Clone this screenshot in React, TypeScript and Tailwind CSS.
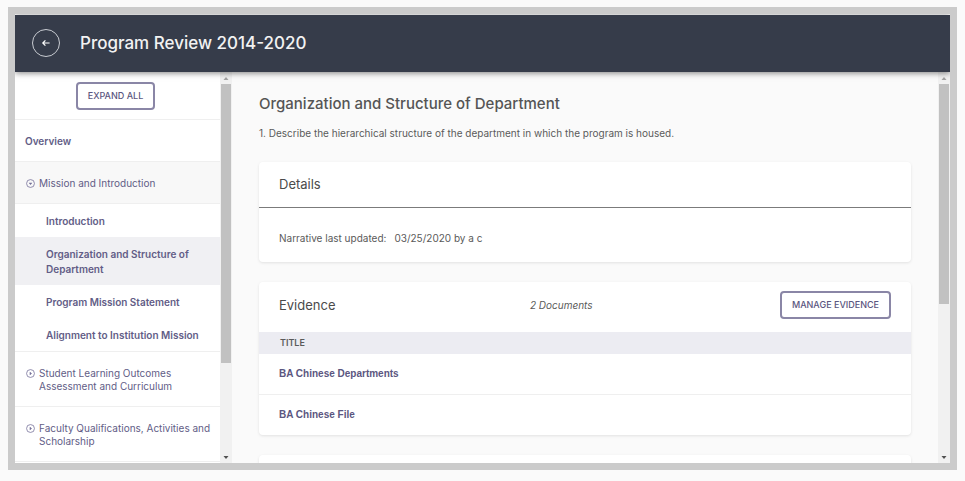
import type { ReactNode } from 'react';

interface NavSection {
  label: string;
  open?: boolean;
  children?: string[];
}

const SECTIONS: NavSection[] = [
  {
    label: 'Mission and Introduction',
    open: true,
    children: [
      'Introduction',
      'Organization and Structure of Department',
      'Program Mission Statement',
      'Alignment to Institution Mission',
    ],
  },
  { label: 'Student Learning Outcomes Assessment and Curriculum' },
  { label: 'Faculty Qualifications, Activities and Scholarship' },
];

const ACTIVE_PAGE = 'Organization and Structure of Department';
const DOCUMENTS = ['BA Chinese Departments', 'BA Chinese File'];

function ToggleIcon({ open }: { open?: boolean }) {
  return (
    <svg viewBox="0 0 16 16" className="mt-[2px] size-[9px] shrink-0" fill="none" stroke="#77729a" strokeWidth="1.4" aria-hidden="true">
      <circle cx="8" cy="8" r="7" />
      <path d={open ? 'M5.5 7h5L8 10Z' : 'M7 5.5v5L10 8Z'} fill="#77729a" strokeWidth="0.8" />
    </svg>
  );
}

function ScrollTrack({ thumb }: { thumb: string }) {
  return (
    <div className="flex w-3 shrink-0 flex-col items-center bg-[#f1f1f1]" aria-hidden="true">
      <svg viewBox="0 0 12 12" className="size-3 shrink-0">
        <path d="M3.5 8h5L6 5Z" fill="#a3a3a3" />
      </svg>
      <div className="min-h-0 w-full grow px-px">
        <div className={`w-full bg-[#c1c1c1] ${thumb}`} />
      </div>
      <svg viewBox="0 0 12 12" className="size-3 shrink-0">
        <path d="M3.5 5h5L6 8Z" fill="#505050" />
      </svg>
    </div>
  );
}

function OutlineButton({ children }: { children: ReactNode }) {
  return (
    <button
      type="button"
      className="h-7 rounded-[4px] border-2 border-[#8a86a6] bg-white px-[10px] text-[9px] leading-3 font-medium text-[#5b5680]"
    >
      {children}
    </button>
  );
}

function Card({ children }: { children?: ReactNode }) {
  return <section className="mb-5 min-h-10 rounded-[4px] bg-white shadow-[0_1px_3px_rgba(0,0,0,0.1)]">{children}</section>;
}

function Sidebar() {
  return (
    <nav className="w-[205px] shrink-0 overflow-hidden bg-white text-[10px] text-[#625d86]">
      <div className="flex h-12 items-center justify-center border-b border-[#efefef] pr-1">
        <OutlineButton>EXPAND ALL</OutlineButton>
      </div>
      <a href="#overview" className="block border-b border-[#efefef] px-[10px] pt-[14px] pb-3 leading-[15px] font-semibold">
        Overview
      </a>
      {SECTIONS.map((section) => (
        <div key={section.label} className="border-b border-[#efefef]">
          <button
            type="button"
            aria-expanded={!!section.open}
            className={`flex w-full gap-1 pt-[15px] pr-1 pb-[13px] pl-[11px] text-left leading-[13px] ${
              section.open ? 'border-b border-[#efefef] bg-[#f8f8f8]' : ''
            }`}
          >
            <ToggleIcon open={section.open} />
            <span>{section.label}</span>
          </button>
          {section.children?.map((page) => (
            <a
              key={page}
              href="#page"
              className={`block pt-[10px] pr-4 pb-2 pl-[31px] leading-[15px] font-semibold ${
                page === ACTIVE_PAGE ? 'bg-[#f0f0f3]' : ''
              }`}
            >
              {page}
            </a>
          ))}
        </div>
      ))}
    </nav>
  );
}

export default function App() {
  return (
    <div className="flex h-screen bg-[#fafafa] px-2 pt-[7px] pb-[11px] font-[family-name:Inter,sans-serif]">
      <div className="flex min-w-0 grow flex-col overflow-hidden border-[7px] border-[#cbcbcb] bg-white pt-px">
        <header className="relative flex h-[57px] shrink-0 items-center gap-5 bg-[#363c4a] px-[17px] pb-px shadow-[0_1px_6px_rgba(0,0,0,0.5)]">
          <button
            type="button"
            aria-label="Back"
            className="flex size-7 items-center justify-center rounded-full border border-[#c9ccd2] text-white"
          >
            <svg viewBox="0 0 10 10" className="size-[10px]" fill="none" stroke="currentColor" strokeWidth="1.2" aria-hidden="true">
              <path d="M8.6 5H1.8M4.4 2.4 1.8 5l2.6 2.6" />
            </svg>
          </button>
          <h1 className="text-[17px] leading-6 font-medium text-[#f2f2f2]">Program Review 2014-2020</h1>
        </header>

        <div className="flex min-h-0 grow">
          <Sidebar />
          <ScrollTrack thumb="h-[76%]" />

          <main className="min-w-0 grow overflow-hidden bg-[#fafafa] px-[27px] pt-[22px] text-[10px] text-[#5a5a5a]">
            <h2 className="text-[15px] leading-5 font-medium text-[#555]">Organization and Structure of Department</h2>
            <p className="mt-3 mb-[22px] leading-[14px]">
              1. Describe the hierarchical structure of the department in which the program is housed.
            </p>

            <Card>
              <h3 className="border-b border-[#7b7b7b] px-5 py-[14px] text-[13px] leading-[17px] text-[#4b4b4b]">Details</h3>
              <dl className="flex gap-2 px-5 pt-[23px] pb-[17px] leading-[14px]">
                <dt>Narrative last updated:</dt>
                <dd>03/25/2020 by a c</dd>
              </dl>
            </Card>

            <Card>
              <div className="grid h-[50px] grid-cols-[41%_1fr_auto] items-center px-5 pb-1">
                <h3 className="text-[13px] leading-[17px] text-[#4b4b4b]">Evidence</h3>
                <span className="italic">2 Documents</span>
                <OutlineButton>MANAGE EVIDENCE</OutlineButton>
              </div>
              <table className="w-full text-left">
                <thead>
                  <tr className="h-[22px] bg-[#ececf2]">
                    <th scope="col" className="px-[21px] text-[9px] leading-3 font-semibold">TITLE</th>
                  </tr>
                </thead>
                <tbody>
                  {DOCUMENTS.map((doc) => (
                    <tr key={doc} className="h-10 border-b border-[#efefef] last:h-[41px] last:border-0">
                      <td className="px-5 leading-[14px] font-bold text-[#5b5680]">
                        <a href="#document" className="font-[family-name:'Liberation_Sans',sans-serif]">{doc}</a>
                      </td>
                    </tr>
                  ))}
                </tbody>
              </table>
            </Card>

            <Card />
          </main>
          <ScrollTrack thumb="h-[60%]" />
        </div>
      </div>
    </div>
  );
}
